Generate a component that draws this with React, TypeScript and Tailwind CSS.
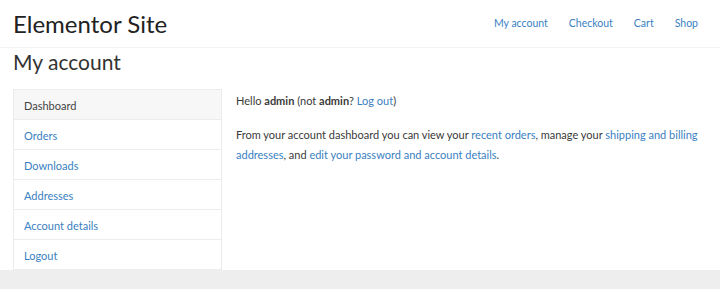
import React from 'react';

const navItems = ['My account', 'Checkout', 'Cart', 'Shop'];
const accountLinks = ['Dashboard', 'Orders', 'Downloads', 'Addresses', 'Account details', 'Logout'];

const Link: React.FC<{ children: React.ReactNode }> = ({ children }) => (
  <a href="#" className="text-[#3a7fc1]">
    {children}
  </a>
);

export default function App() {
  return (
    <div className="min-h-[289px] bg-[#eeeeee] font-['Lato','Open_Sans',sans-serif] text-[#3a3a3a]">
      <div className="bg-white">
        {/* Site header */}
        <header className="flex h-[48px] items-center justify-between border-b border-[#f3f3f3] px-[13px]">
          <div className="text-[24px] leading-none text-[#222]">Elementor Site</div>
          <nav className="flex gap-[21px] pr-[9px] text-[10.5px]">
            {navItems.map(item => (
              <a key={item} href="#" className="text-[#3a7fc1]">
                {item}
              </a>
            ))}
          </nav>
        </header>

        <main className="px-[13px]">
          <h1 className="text-[21px] leading-[28px] text-[#333]">My account</h1>

          <div className="mt-[13px] flex">
            {/* Account navigation */}
            <ul className="w-[209px] shrink-0 border-x border-t border-[#ececec] text-[11px]">
              {accountLinks.map((item, i) => (
                <li
                  key={item}
                  className={`flex h-[30px] items-center border-b border-[#ececec] px-[10px] pt-[4px] ${
                    i === 0 ? 'bg-[#f7f7f7] text-[#444]' : 'text-[#3a7fc1]'
                  }`}
                >
                  {item}
                </li>
              ))}
            </ul>

            {/* Dashboard content */}
            <div className="flex-1 pl-[14px] pt-[2px] text-[11px] leading-[20px]">
              <p>
                Hello <strong>admin</strong> (not <strong>admin</strong>? <Link>Log out</Link>)
              </p>
              <p className="mt-[14px]">
                From your account dashboard you can view your <Link>recent orders</Link>, manage your{' '}
                <Link>shipping and billing addresses</Link>, and{' '}
                <Link>edit your password and account details</Link>.
              </p>
            </div>
          </div>
        </main>
      </div>
    </div>
  );
}
